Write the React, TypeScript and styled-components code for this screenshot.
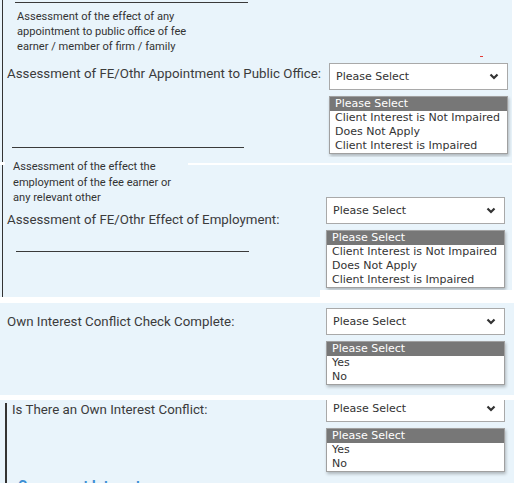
import React from "react";
import styled, { createGlobalStyle } from "styled-components";

const Global = createGlobalStyle`
  html, body { margin: 0; padding: 0; background: #ffffff; }
  body { width: 514px; height: 483px; overflow: hidden; font-family: Roboto, "Liberation Sans", sans-serif; }
`;

const Page = styled.div`
  width: 514px;
  height: 483px;
  overflow: hidden;
  display: flex;
  flex-direction: column;
  background: #ffffff;
`;

const Section = styled.section<{ $width?: number; $gapTop?: number; $height: number; $clip?: boolean }>`
  position: relative;
  width: ${(p) => p.$width ?? 514}px;
  height: ${(p) => p.$height}px;
  margin-top: ${(p) => p.$gapTop ?? 0}px;
  background: #e9f4fb;
  flex-shrink: 0;
  overflow: ${(p) => (p.$clip ? "hidden" : "visible")};
`;

const Bordered = styled.div<{ $left: number; $width: number; $top?: number }>`
  margin-left: ${(p) => p.$left}px;
  margin-top: ${(p) => p.$top ?? 0}px;
  height: calc(100% - ${(p) => p.$top ?? 0}px);
  border-left: ${(p) => p.$width}px solid #333333;
  box-sizing: border-box;
`;

const Body = styled.div<{ $padTop: number; $padLeft: number }>`
  display: flex;
  align-items: flex-start;
  padding-top: ${(p) => p.$padTop}px;
  padding-left: ${(p) => p.$padLeft}px;
`;

const LeftCol = styled.div<{ $width: number }>`
  width: ${(p) => p.$width}px;
  display: flex;
  flex-direction: column;
  flex-shrink: 0;
`;

const RightCol = styled.div<{ $top: number }>`
  width: 179px;
  margin-top: ${(p) => p.$top}px;
  display: flex;
  flex-direction: column;
  gap: 6px;
`;

const Rule = styled.div<{ $indent: number; $width: number; $top: number }>`
  margin-left: ${(p) => p.$indent}px;
  margin-top: ${(p) => p.$top}px;
  width: ${(p) => p.$width}px;
  height: 1px;
  background: #3a3a3a;
`;

const Note = styled.div<{ $indent: number; $top: number; $lh: number }>`
  margin-left: ${(p) => p.$indent}px;
  margin-top: ${(p) => p.$top}px;
  font-size: 11.1px;
  line-height: ${(p) => p.$lh}px;
  color: #333333;
  white-space: nowrap;
`;

const NoteLine = styled.div``;

const Label = styled.div<{ $indent?: number; $top: number }>`
  margin-left: ${(p) => p.$indent ?? 0}px;
  margin-top: ${(p) => p.$top}px;
  font-size: 13.3px;
  line-height: 16px;
  color: #3b3b3b;
  white-space: nowrap;
`;

const SelectBox = styled.div`
  height: 27px;
  box-sizing: border-box;
  border: 1px solid #a9a9a9;
  background: #ffffff;
  display: flex;
  align-items: center;
  justify-content: space-between;
  padding: 0 8px 0 6px;
  font-family: "DejaVu Sans", Verdana, sans-serif;
  font-size: 11px;
  color: #333333;
`;

const ListBox = styled.div`
  box-sizing: border-box;
  width: 179px;
  border: 1px solid #a0a0a0;
  background: #ffffff;
  box-shadow: 1px 2px 3px rgba(0, 0, 0, 0.25);
  font-family: "DejaVu Sans", Verdana, sans-serif;
  font-size: 11px;
`;

const Option = styled.div<{ $active?: boolean }>`
  height: 14px;
  line-height: 14px;
  padding-left: 5px;
  white-space: nowrap;
  color: ${(p) => (p.$active ? "#ffffff" : "#333333")};
  background: ${(p) => (p.$active ? "#777777" : "transparent")};
`;

const RedMark = styled.div`
  position: absolute;
  left: 480px;
  top: 56px;
  width: 3px;
  height: 1px;
  background: #e53935;
`;

const WhiteLine = styled.div<{ $left: number; $top: number; $w: number; $h: number }>`
  position: absolute;
  left: ${(p) => p.$left}px;
  top: ${(p) => p.$top}px;
  width: ${(p) => p.$w}px;
  height: ${(p) => p.$h}px;
  background: #ffffff;
`;

const Heading = styled.div`
  margin-left: 11px;
  margin-top: 5px;
  font-size: 14px;
  line-height: 18px;
  font-weight: 700;
  color: #3d8fd4;
  white-space: nowrap;
`;

const Chevron = () => (
  <svg width="10" height="7" viewBox="0 0 10 7" aria-hidden>
    <polyline points="1.5,1.5 5,5 8.5,1.5" fill="none" stroke="#333" strokeWidth="2.2" />
  </svg>
);

const Dropdown = ({ options, top }: { options: string[]; top: number }) => (
  <RightCol $top={top}>
    <SelectBox>
      <span>Please Select</span>
      <Chevron />
    </SelectBox>
    <ListBox>
      {options.map((o, i) => (
        <Option key={o} $active={i === 0}>
          {o}
        </Option>
      ))}
    </ListBox>
  </RightCol>
);

const impairOptions = [
  "Please Select",
  "Client Interest is Not Impaired",
  "Does Not Apply",
  "Client Interest is Impaired",
];
const yesNo = ["Please Select", "Yes", "No"];

export default function App() {
  return (
    <>
      <Global />
      <Page>
        <Section $width={512} $height={157}>
          <Bordered $left={2} $width={1}>
            <Body $padTop={0} $padLeft={4}>
              <LeftCol $width={322}>
                <Rule $indent={8} $width={233} $top={2} />
                <Note $indent={10} $top={6} $lh={15}>
                  <NoteLine>Assessment of the effect of any</NoteLine>
                  <NoteLine>appointment to public office of fee</NoteLine>
                  <NoteLine>earner / member of firm / family</NoteLine>
                </Note>
                <Label $top={12}>Assessment of FE/Othr Appointment to Public Office:</Label>
                <Rule $indent={5} $width={232} $top={65} />
              </LeftCol>
              <Dropdown options={impairOptions} top={63} />
            </Body>
          </Bordered>
          <RedMark />
        </Section>

        <Section $width={512} $height={140}>
          <Bordered $left={2} $width={1}>
            <Body $padTop={2} $padLeft={4}>
              <LeftCol $width={319}>
                <Note $indent={6} $top={0} $lh={15.5}>
                  <NoteLine>Assessment of the effect the</NoteLine>
                  <NoteLine>employment of the fee earner or</NoteLine>
                  <NoteLine>any relevant other</NoteLine>
                </Note>
                <Label $top={6}>Assessment of FE/Othr Effect of Employment:</Label>
                <Rule $indent={9} $width={233} $top={23} />
              </LeftCol>
              <Dropdown options={impairOptions} top={38} />
            </Body>
          </Bordered>
          <WhiteLine $left={0} $top={5} $w={5} $h={3} />
          <WhiteLine $left={188} $top={6} $w={324} $h={2} />
          <WhiteLine $left={320} $top={133} $w={192} $h={7} />
        </Section>

        <Section $gapTop={6} $height={92}>
          <Body $padTop={11} $padLeft={7}>
            <LeftCol $width={319}>
              <Label $top={0}>Own Interest Conflict Check Complete:</Label>
            </LeftCol>
            <Dropdown options={yesNo} top={-6} />
          </Body>
        </Section>

        <Section $gapTop={5} $height={83} $clip>
          <Bordered $left={5} $width={2} $top={3}>
            <Body $padTop={0} $padLeft={5}>
              <LeftCol $width={314}>
                <Label $top={-1}>Is There an Own Interest Conflict:</Label>
              </LeftCol>
              <Dropdown options={yesNo} top={-8} />
            </Body>
            <Heading>Concurrent Interests</Heading>
          </Bordered>
        </Section>
      </Page>
    </>
  );
}
